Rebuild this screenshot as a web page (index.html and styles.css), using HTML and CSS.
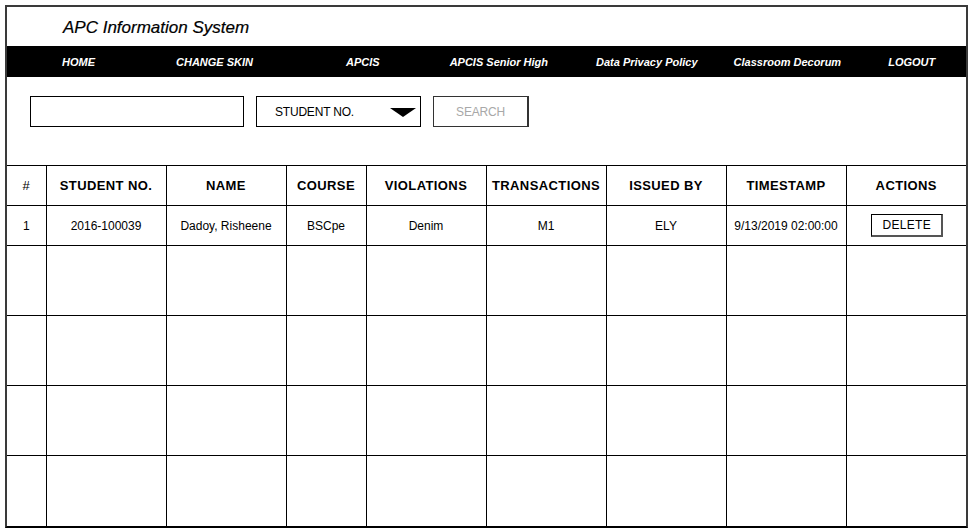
FILE: index.html
```html
<!DOCTYPE html>
<html>
<head>
<meta charset="utf-8">
<link rel="stylesheet" href="styles.css">
</head>
<body>
<div class="frame">
  <header class="title">APC Information System</header>
  <nav class="nav">
    <span class="nav-item home">HOME</span>
    <span class="nav-item skin">CHANGE SKIN</span>
    <span class="nav-item apcis">APCIS</span>
    <span class="nav-item senior">APCIS Senior High</span>
    <span class="nav-item privacy">Data Privacy Policy</span>
    <span class="nav-item decorum">Classroom Decorum</span>
    <span class="nav-item logout">LOGOUT</span>
  </nav>
  <div class="search">
    <div class="search-input"></div>
    <div class="select">
      <span>STUDENT NO.</span>
      <svg class="caret" width="26" height="9" viewBox="0 0 26 9"><polygon points="0,0 26,0 13,9" fill="#000"/></svg>
    </div>
    <div class="search-btn">SEARCH</div>
  </div>
  <table class="grid">
    <colgroup>
      <col class="c-num"><col class="c-w"><col class="c-w"><col class="c-s"><col class="c-w"><col class="c-w"><col class="c-w"><col class="c-w"><col class="c-w">
    </colgroup>
    <thead>
      <tr class="head">
        <th>#</th><th>STUDENT NO.</th><th>NAME</th><th>COURSE</th><th>VIOLATIONS</th><th>TRANSACTIONS</th><th>ISSUED BY</th><th>TIMESTAMP</th><th>ACTIONS</th>
      </tr>
    </thead>
    <tbody>
      <tr class="data">
        <td>1</td><td>2016-100039</td><td>Dadoy, Risheene</td><td>BSCpe</td><td>Denim</td><td>M1</td><td>ELY</td><td>9/13/2019 02:00:00</td><td><span class="del">DELETE</span></td>
      </tr>
      <tr class="empty"><td></td><td></td><td></td><td></td><td></td><td></td><td></td><td></td><td></td></tr>
      <tr class="empty"><td></td><td></td><td></td><td></td><td></td><td></td><td></td><td></td><td></td></tr>
      <tr class="empty"><td></td><td></td><td></td><td></td><td></td><td></td><td></td><td></td><td></td></tr>
      <tr class="empty"><td></td><td></td><td></td><td></td><td></td><td></td><td></td><td></td><td></td></tr>
    </tbody>
  </table>
</div>
</body>
</html>
```

FILE: styles.css
```css
* { box-sizing: border-box; }
html, body { margin: 0; padding: 0; background: #fff; }
body { font-family: "Liberation Sans", Arial, sans-serif; color: #000; }

.frame {
  margin: 5px 0 0 5px;
  width: 963px;
  border-top: 2px solid #3a3a3a;
  border-left: 2px solid #3a3a3a;
  border-right: 2px solid #3a3a3a;
  border-bottom: 2px solid #000;
}

.title {
  height: 39px;
  padding: 11px 0 0 56px;
  font-size: 17px;
  font-style: italic;
  line-height: 20px;
  -webkit-text-stroke: 0.2px #000;
}

.nav {
  height: 31px;
  background: #000;
  color: #fff;
  display: flex;
  align-items: center;
  font-size: 11px;
  font-weight: bold;
  font-style: italic;
}
.nav-item { white-space: nowrap; }
.home { margin-left: 55px; }
.skin { margin-left: 81px; }
.apcis { margin-left: 93px; }
.senior { margin-left: 70px; }
.privacy { margin-left: 48px; }
.decorum { margin-left: 36px; }
.logout { margin-left: 47px; }

.search {
  height: 88px;
  display: flex;
  align-items: flex-start;
  padding: 19px 0 0 23px;
}
.search-input {
  width: 214px;
  height: 31px;
  border: 1px solid #000;
}
.select {
  margin-left: 12px;
  width: 165px;
  height: 31px;
  border: 1px solid #000;
  display: flex;
  align-items: center;
  padding-left: 18px;
  font-size: 12px;
  letter-spacing: -0.2px;
}
.caret { margin-left: 36px; margin-top: 2px; }
.search-btn {
  margin-left: 12px;
  width: 96px;
  height: 31px;
  border: 1px solid #333;
  border-right-width: 2px;
  display: flex;
  align-items: center;
  justify-content: center;
  color: #a8a8a8;
  font-size: 12px;
  letter-spacing: -0.2px;
}

.grid {
  border-collapse: collapse;
  table-layout: fixed;
  width: 959px;
}
.c-num { width: 39px; }
.c-w { width: 120px; }
.c-s { width: 80px; }
.grid th, .grid td {
  border: 1px solid #000;
  text-align: center;
  padding: 0;
}
.grid tr > :first-child { border-left: none; }
.grid tr > :last-child { border-right: none; }
.grid tbody tr:last-child td { border-bottom: none; }
.head th {
  height: 40px;
  font-size: 13px;
  font-weight: bold;
  letter-spacing: 0.4px;
}
.head th:first-child { font-weight: normal; }
.data td {
  height: 40px;
  font-size: 12px;
}
.empty td { height: 70px; }
.del {
  display: inline-block;
  width: 72px;
  height: 23px;
  line-height: 21px;
  border: 1px solid #000;
  border-right-width: 2px;
  border-bottom-width: 2px;
  border-right-color: #555;
  border-bottom-color: #555;
  font-size: 12px;
  letter-spacing: 0.3px;
  margin-left: 2px;
}
```
